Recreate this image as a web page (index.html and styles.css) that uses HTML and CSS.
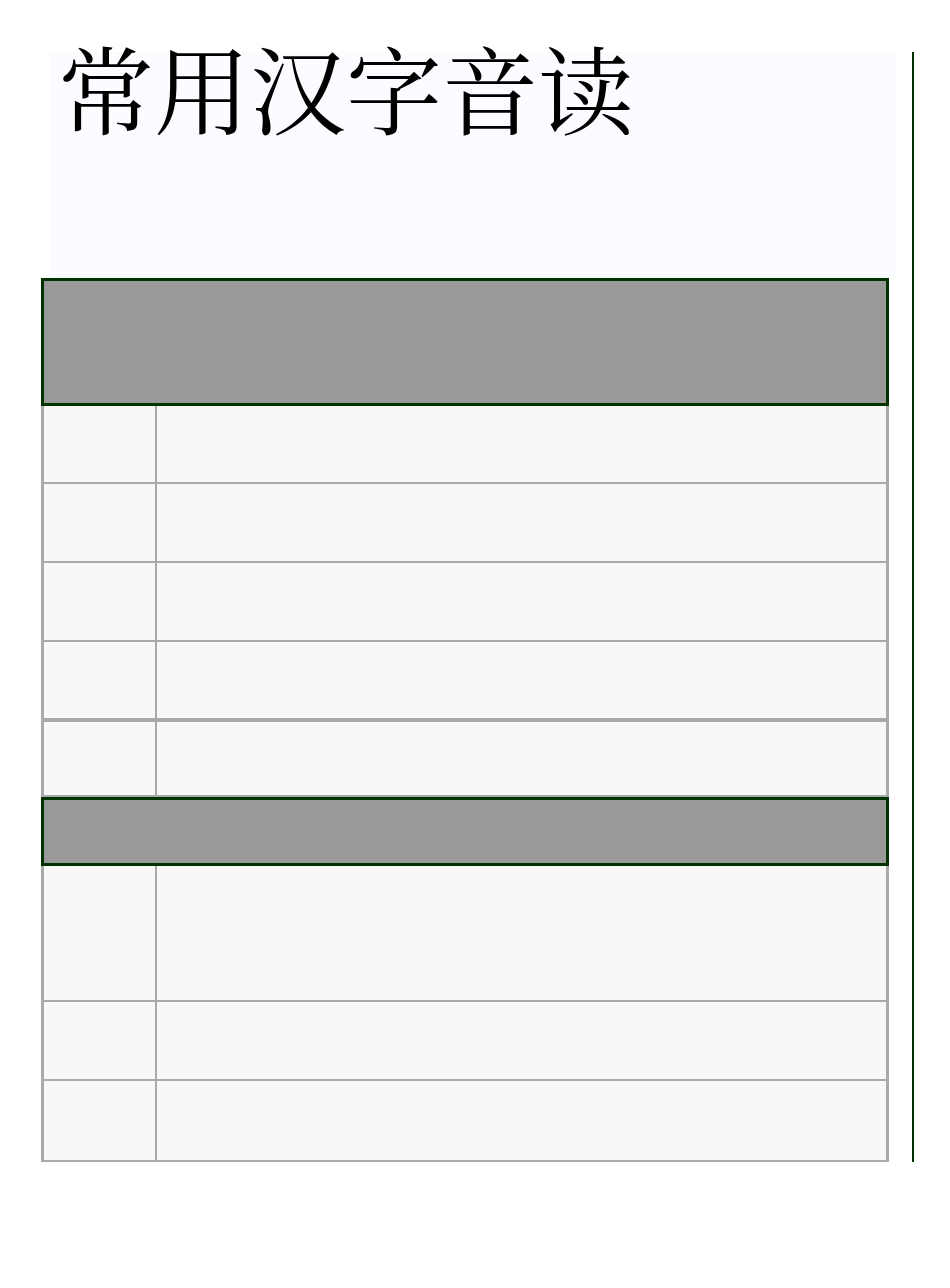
FILE: index.html
```html
<!DOCTYPE html>
<html lang="zh">
<head>
<meta charset="utf-8">
<title>常用汉字音读</title>
<link rel="stylesheet" href="styles.css">
</head>
<body>
<div class="page">
  <div class="main">
    <div class="title-box">
      <h1 class="title">常用汉字音读</h1>
    </div>
    <div class="table">
      <div class="head head-tall"></div>
      <div class="row h78"><div class="cell-key"></div><div class="cell-val"></div></div>
      <div class="row h79"><div class="cell-key"></div><div class="cell-val"></div></div>
      <div class="row h79"><div class="cell-key"></div><div class="cell-val"></div></div>
      <div class="row h80 thick-bottom"><div class="cell-key"></div><div class="cell-val"></div></div>
      <div class="row h75"><div class="cell-key"></div><div class="cell-val"></div></div>
      <div class="head head-short"></div>
      <div class="row h136"><div class="cell-key"></div><div class="cell-val"></div></div>
      <div class="row h79"><div class="cell-key"></div><div class="cell-val"></div></div>
      <div class="row h81"><div class="cell-key"></div><div class="cell-val"></div></div>
    </div>
  </div>
  <div class="rule"></div>
</div>
</body>
</html>
```

FILE: styles.css
```css
* { box-sizing: border-box; }
html, body { margin: 0; padding: 0; background: #ffffff; }
body { font-family: "Noto Serif CJK SC", "AR PL UMing CN", "Liberation Serif", "Noto Sans CJK SC", serif; color: #000; }

.page {
  display: flex;
  align-items: flex-start;
  padding-top: 52px;
}

.main {
  margin-left: 41px;
  width: 848px;
}

.title-box {
  margin-left: 9px;
  width: 847px;
  height: 225px;
  background: #fafcff;
}

.title {
  margin: 0;
  padding-left: 8px;
  font-size: 96px;
  font-weight: normal;
  line-height: 68px;
  letter-spacing: 0;
}

.table {
  margin-top: 1px;
  display: flex;
  flex-direction: column;
}

.head {
  background: #999999;
  border: 3px solid #003300;
}
.head-tall { height: 128px; }
.head-short { height: 69px; }

.row {
  display: grid;
  grid-template-columns: 113px 1fr;
  background: #f8f8f8;
  border-left: 3px solid #aaaaaa;
  border-right: 3px solid #aaaaaa;
  border-bottom: 2px solid #aaaaaa;
}
.row.thick-bottom { border-bottom-width: 4px; }
.cell-key { border-right: 2px solid #aaaaaa; }

.h75 { height: 75px; }
.h78 { height: 78px; }
.h79 { height: 79px; }
.h80 { height: 80px; }
.h81 { height: 81px; }
.h136 { height: 136px; }

.rule {
  margin-left: 23px;
  width: 2px;
  height: 1110px;
  background: #003300;
}
```
